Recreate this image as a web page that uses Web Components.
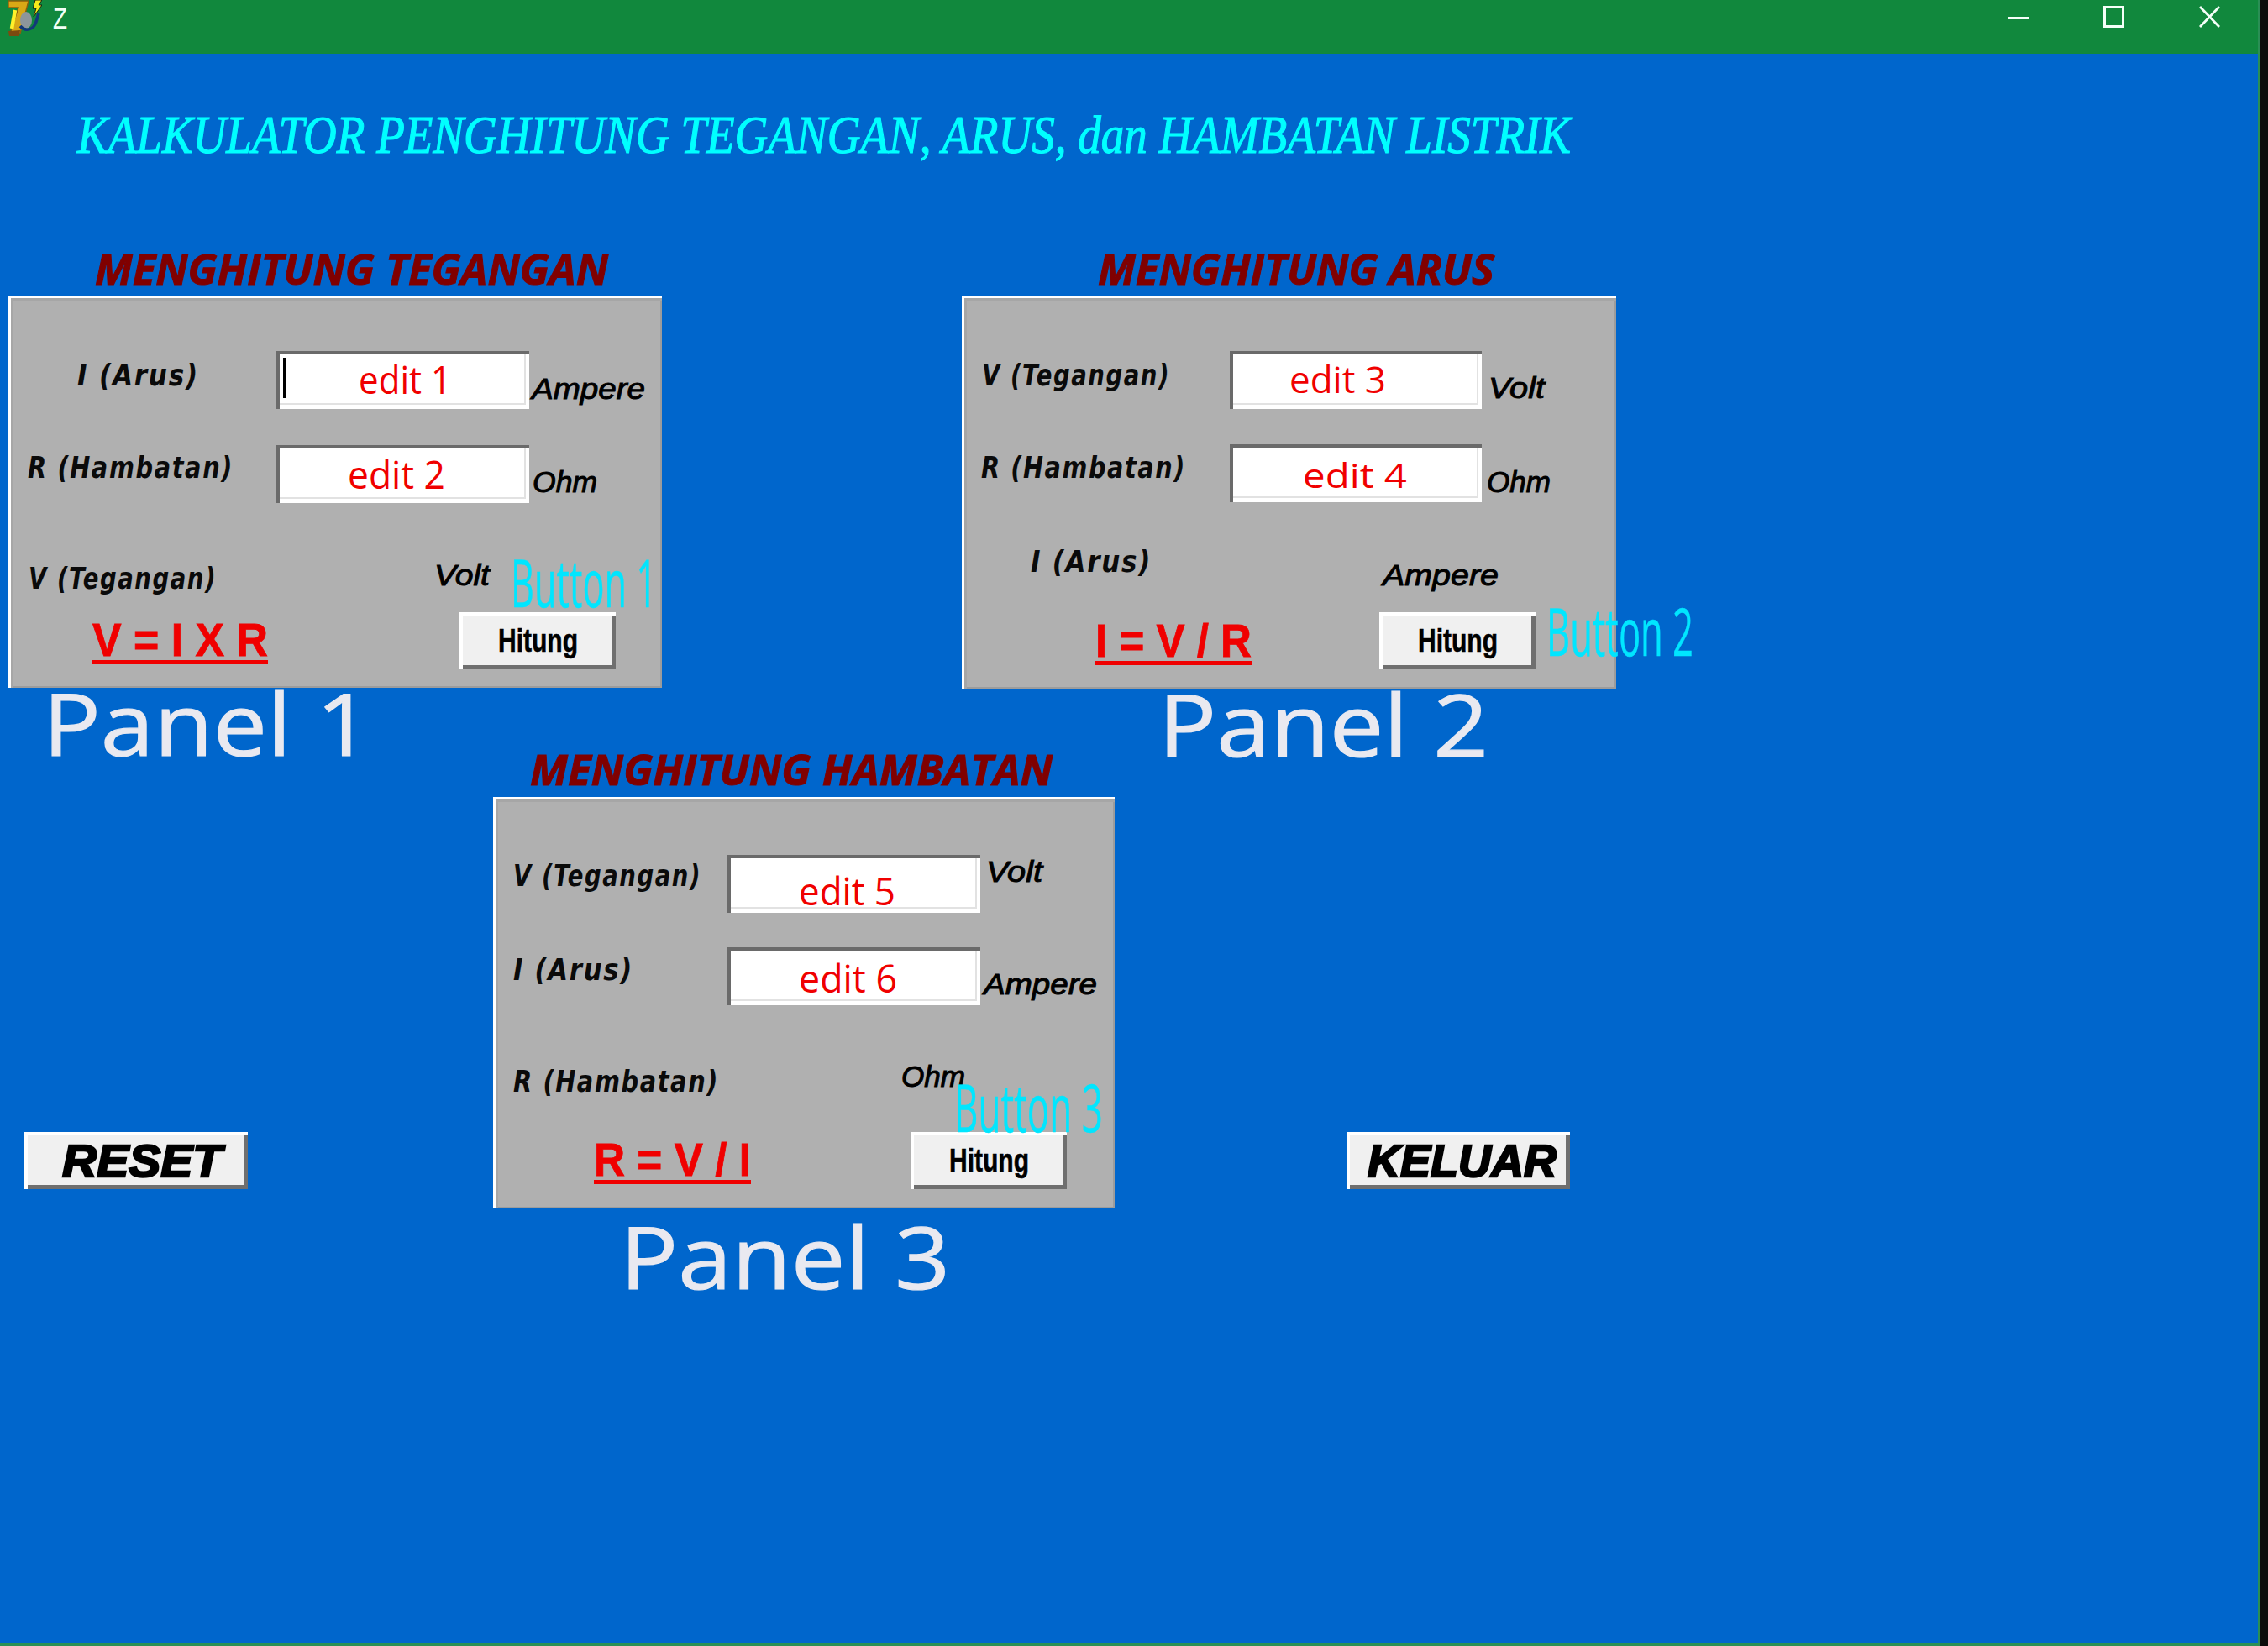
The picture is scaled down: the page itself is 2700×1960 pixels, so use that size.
<!DOCTYPE html>
<html lang="id">
<head>
<meta charset="utf-8">
<title>z</title>
<style>
html,body{margin:0;padding:0;background:#0b0b0b}
</style>
</head>
<body>
<app-window>
  <title-bar slot="bar"><fit-text kind="z" s="35" w="17">Z</fit-text></title-bar>
  <fit-text kind="title" s="64" w="1778" style="margin:65px 0 0 92px;height:167px">KALKULATOR PENGHITUNG TEGANGAN, ARUS, dan HAMBATAN LISTRIK</fit-text>
  <form-row style="padding-left:10px;gap:357px">
    <calc-panel heading="MENGHITUNG TEGANGAN" hw="611" hx="103" hy="-1" caption="Panel 1" cw="391" cx="41" cy="-9" style="--box-w:778px;--box-h:467px;--pad:66px;--cols:319px 301px 1fr;--rows:112px 69px 130px 68px">
      <fit-text kind="label" s="36" w="145" style="margin:11px 0 0 82px">I (Arus)</fit-text>
      <edit-box caret><fit-text kind="edit" s="46" w="110" style="margin:10px 0 0 98px">edit 1</fit-text></edit-box>
      <fit-text kind="unit" s="35" w="135" style="margin:27px 0 0 3px">Ampere</fit-text>
      <fit-text kind="label" s="36" w="245" style="margin:9px 0 0 23px">R (Hambatan)</fit-text>
      <edit-box><fit-text kind="edit" s="46" w="116" style="margin:11px 0 0 85px">edit 2</fit-text></edit-box>
      <fit-text kind="unit" s="35" w="77" style="margin:26px 0 0 4px">Ohm</fit-text>
      <fit-text kind="label" s="36" w="224" style="margin:72px 0 0 24px">V (Tegangan)</fit-text>
      <fit-text kind="unit" s="35" w="66" style="margin:68px 0 0 188px">Volt</fit-text>
      <fit-text kind="formula" s="55" w="209" style="grid-column:1;margin:6px 0 0 100px">V = I X R</fit-text>
      <ui-button style="margin-left:218px"><fit-text kind="hitung" s="38" w="95">Hitung</fit-text></ui-button>
      <fit-text kind="ghost" s="78" w="174" style="position:absolute;left:598px;top:302px">Button 1</fit-text>
    </calc-panel>
    <calc-panel heading="MENGHITUNG ARUS" hw="472" hx="162" hy="-1" caption="Panel 2" cw="393" cx="234" cy="-9" style="--box-w:779px;--box-h:468px;--pad:66px;--cols:319px 300px 1fr;--rows:111px 70px 130px 68px">
      <fit-text kind="label" s="36" w="224" style="margin:11px 0 0 24px">V (Tegangan)</fit-text>
      <edit-box><fit-text kind="edit" s="44" w="115" style="margin:11px 0 0 71px">edit 3</fit-text></edit-box>
      <fit-text kind="unit" s="35" w="67" style="margin:26px 0 0 8px">Volt</fit-text>
      <fit-text kind="label" s="36" w="244" style="margin:10px 0 0 23px">R (Hambatan)</fit-text>
      <edit-box><fit-text kind="edit" s="40" w="124" style="margin:17px 0 0 87px">edit 4</fit-text></edit-box>
      <fit-text kind="unit" s="35" w="76" style="margin:27px 0 0 6px">Ohm</fit-text>
      <fit-text kind="label" s="36" w="144" style="margin:52px 0 0 82px">I (Arus)</fit-text>
      <fit-text kind="unit" s="35" w="138" style="margin:68px 0 0 182px">Ampere</fit-text>
      <fit-text kind="formula" s="55" w="186" style="grid-column:1;margin:7px 0 0 159px">I = V / R</fit-text>
      <ui-button style="margin-left:178px"><fit-text kind="hitung" s="38" w="95">Hitung</fit-text></ui-button>
      <fit-text kind="ghost" s="78" w="175" style="position:absolute;left:696px;top:360px">Button 2</fit-text>
    </calc-panel>
  </form-row>
  <form-row style="padding-left:29px">
    <ui-button big style="margin-top:455px;width:266px"><fit-text kind="big" s="54" w="190" style="margin-left:45px">RESET</fit-text></ui-button>
    <calc-panel heading="MENGHITUNG HAMBATAN" hw="622" hx="44" hy="-2" caption="Panel 3" cw="393" cx="151" cy="6" style="margin-left:292px;--box-w:740px;--box-h:490px;--pad:69px;--cols:279px 301px 1fr;--rows:110px 69px 151px 69px">
      <fit-text kind="label" s="36" w="224" style="margin:7px 0 0 24px">V (Tegangan)</fit-text>
      <edit-box><fit-text kind="edit" s="46" w="115" style="margin:19px 0 0 85px">edit 5</fit-text></edit-box>
      <fit-text kind="unit" s="35" w="67" style="margin:2px 0 0 7px">Volt</fit-text>
      <fit-text kind="label" s="36" w="143" style="margin:9px 0 0 24px">I (Arus)</fit-text>
      <edit-box><fit-text kind="edit" s="46" w="117" style="margin:13px 0 0 85px">edit 6</fit-text></edit-box>
      <fit-text kind="unit" s="35" w="135" style="margin:26px 0 0 4px">Ampere</fit-text>
      <fit-text kind="label" s="36" w="245" style="margin:73px 0 0 24px">R (Hambatan)</fit-text>
      <fit-text kind="unit" s="35" w="76" style="margin:67px 0 0 207px">Ohm</fit-text>
      <fit-text kind="formula" s="55" w="187" style="grid-column:1;margin:6px 0 0 120px">R = V / I</fit-text>
      <ui-button style="margin-left:218px"><fit-text kind="hitung" s="38" w="95">Hitung</fit-text></ui-button>
      <fit-text kind="ghost" s="78" w="177" style="position:absolute;left:549px;top:330px">Button 3</fit-text>
    </calc-panel>
    <ui-button big style="margin:455px 0 0 276px;width:266px"><fit-text kind="big" s="54" w="225" style="margin-left:25px">KELUAR</fit-text></ui-button>
  </form-row>
</app-window>
<script>
function shadow(el, html){ const r = el.shadowRoot || el.attachShadow({mode:'open'}); r.innerHTML = html; return r; }

class FitText extends HTMLElement{
  connectedCallback(){
    const s = this.getAttribute('s') || 32, w = parseFloat(this.getAttribute('w'));
    const r = shadow(this, `<style>
      :host{display:block;white-space:nowrap;line-height:1;font-size:${s}px;width:${w}px;font-family:"Open Sans","Liberation Sans",sans-serif;color:#000}
      :host([kind=title]){font-family:"Liberation Serif",serif;font-style:italic;color:#00ffff;-webkit-text-stroke:1.2px #00ffff}
      :host([kind=z]){color:#f2fff6;font-family:"Liberation Sans",sans-serif}
      :host([kind=heading]){font-weight:700;font-style:italic;color:#800000;-webkit-text-stroke:1px #800000}
      :host([kind=edit]){color:#f00000}
      :host([kind=ghost]){color:#00e6ff;-webkit-text-stroke:.4px #00e6ff}
      :host([kind=caption]){color:#e9e9f0;-webkit-text-stroke:1.2px #e9e9f0}
      :host([kind=label]){font-family:"DejaVu Sans",sans-serif;font-weight:700;font-style:italic;letter-spacing:2px;color:#0a0a0a}
      :host([kind=unit]){font-family:"Liberation Sans",sans-serif;font-style:italic;color:#000;-webkit-text-stroke:1px #000}
      :host([kind=formula]){font-family:"Liberation Sans",sans-serif;font-weight:700;color:#f00000;-webkit-text-stroke:.8px #f00000}
      :host([kind=formula]) span{text-decoration:underline;text-decoration-thickness:5px;text-underline-offset:5px;text-decoration-skip-ink:none}
      :host([kind=hitung]){font-family:"Liberation Sans",sans-serif;font-weight:700;color:#000;-webkit-text-stroke:.6px #000}
      :host([kind=big]){font-family:"Liberation Sans",sans-serif;font-weight:700;font-style:italic;color:#000;-webkit-text-stroke:2.4px #000}
      span{display:inline-block;transform-origin:0 0}
    </style><span><slot></slot></span>`);
    const sp = r.querySelector('span');
    const natural = sp.getBoundingClientRect().width;
    if(natural > 0 && w) sp.style.transform = `scaleX(${w/natural})`;
  }
}

class AppWindow extends HTMLElement{
  connectedCallback(){
    shadow(this, `<style>
      :host{display:block;width:2700px;height:1960px;background:#0b0b0b;overflow:hidden}
      .win{box-sizing:border-box;width:2691px;height:1960px;background:#0066cc;border-right:3px solid #2a8f55;border-bottom:3px solid #2a8f55;display:flex;flex-direction:column}
    </style><div class="win"><slot name="bar"></slot><slot></slot></div>`);
  }
}

class TitleBar extends HTMLElement{
  connectedCallback(){
    shadow(this, `<style>
      :host{display:flex;flex:none;align-items:flex-start;height:64px;background:#11883d;padding:0 45px 0 5px}
      .icon{width:45px;height:43px;flex:none}
      .name{margin:4px 0 0 13px}
      .sp{flex:1}
      .cap{display:flex;gap:89px;margin-top:7px}
      .cap svg{width:25px;height:26px;display:block;fill:none;stroke:#f4fff8}
    </style>
    <svg class="icon" viewBox="0 0 45 43">
      <path d="M5 1H29L19 40H7L17 9H5Z" fill="#d9a816" stroke="#8c5c0c" stroke-width="1.4"/>
      <path d="M13 12L9 34" stroke="#fff02a" stroke-width="4.5" fill="none"/>
      <path d="M5 37L19 36L18 43H6Z" fill="#7c4a10"/>
      <ellipse cx="26" cy="24" rx="7" ry="10" fill="#8d969b"/>
      <path d="M19 31C25 38 35 36 38 26L41 16" fill="none" stroke="#12387a" stroke-width="3.5"/>
      <path d="M37 0H45L41 6H45L35 20L38 10H34Z" fill="#f6ea1a" stroke="#111" stroke-width=".9"/>
    </svg>
    <div class="name"><slot></slot></div>
    <div class="sp"></div>
    <div class="cap">
      <svg viewBox="0 0 25 26"><path d="M0 14.5H25" stroke-width="3"/></svg>
      <svg viewBox="0 0 25 26"><rect x="1.5" y="1.5" width="22" height="23" stroke-width="3"/></svg>
      <svg viewBox="0 0 25 26"><path d="M1 1L24 25M24 1L1 25" stroke-width="2.8"/></svg>
    </div>`);
  }
}

class FormRow extends HTMLElement{
  connectedCallback(){
    shadow(this, `<style>:host{display:flex;align-items:flex-start;flex:none}</style><slot></slot>`);
  }
}

class CalcPanel extends HTMLElement{
  connectedCallback(){
    const a = n => this.getAttribute(n);
    shadow(this, `<style>
      :host{display:block;flex:none;width:var(--box-w)}
      .head{height:56px;display:flex;align-items:flex-start}
      .box{position:relative;box-sizing:border-box;width:var(--box-w);height:var(--box-h);background:#b0b0b0;padding-top:var(--pad);
        display:grid;grid-template-columns:var(--cols);grid-template-rows:var(--rows);align-items:start;
        box-shadow:inset 3px 3px 0 #fff,inset 6px 6px 0 #a6a6a6,inset -2px -2px 0 #9c9c9c}
      .cap{height:73px;display:flex;align-items:flex-start}
      fit-text{flex:none}
    </style>
    <div class="head"><fit-text kind="heading" s="50" w="${a('hw')}" style="margin:${a('hy')}px 0 0 ${a('hx')}px">${a('heading')}</fit-text></div>
    <div class="box"><slot></slot></div>
    <div class="cap"><fit-text kind="caption" s="102" w="${a('cw')}" style="margin:${a('cy')}px 0 0 ${a('cx')}px">${a('caption')}</fit-text></div>`);
  }
}

class EditBox extends HTMLElement{
  connectedCallback(){
    const caret = this.hasAttribute('caret') ? '<i class="caret"></i>' : '';
    shadow(this, `<style>
      :host{display:flow-root;position:relative;box-sizing:border-box;height:69px;background:#fff;
        box-shadow:inset 4px 4px 0 #6a6a6a,inset -4px -5px 0 #fff,inset -6px -7px 0 #e2e2e2}
      .caret{position:absolute;left:8px;top:8px;width:3px;height:48px;background:#000}
    </style>${caret}<slot></slot>`);
  }
}

class UiButton extends HTMLElement{
  connectedCallback(){
    const big = this.hasAttribute('big');
    shadow(this, `<style>
      :host{display:flex;box-sizing:border-box;align-items:center;justify-content:${big?'flex-start':'center'};width:186px;height:68px;background:#f0f0f0;flex:none;
        box-shadow:inset 4px 4px 0 #fff,inset -5px -5px 0 #6f6f6f}
    </style><slot></slot>`);
  }
}

customElements.define('fit-text', FitText);
customElements.define('edit-box', EditBox);
customElements.define('ui-button', UiButton);
customElements.define('form-row', FormRow);
customElements.define('calc-panel', CalcPanel);
customElements.define('title-bar', TitleBar);
customElements.define('app-window', AppWindow);
</script>
</body>
</html>
